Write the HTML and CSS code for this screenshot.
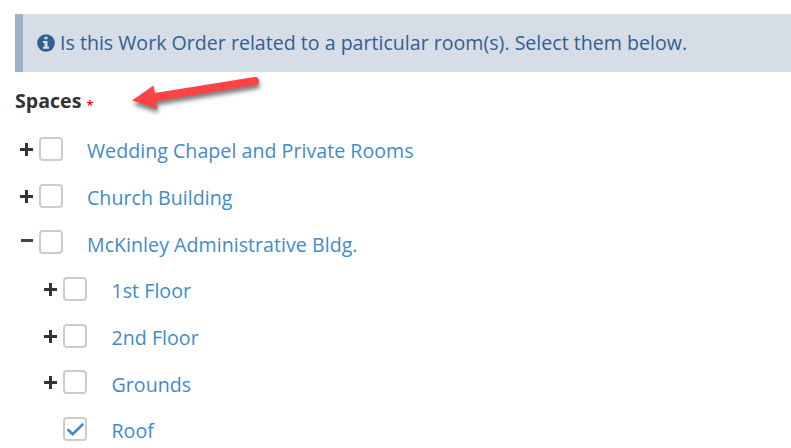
FILE: index.html
```html
<!DOCTYPE html>
<html lang="en">
<head>
    <meta charset="utf-8">
    <title>Work Order Spaces</title>
    <link rel="stylesheet" href="styles.css">
</head>
<body>
<div class="note">
    <svg class="info" viewBox="0 0 18 18">
        <circle cx="9" cy="9" r="8.8" fill="#315f92"/>
        <path d="M7.4 2.7h3.1v2.5H7.4zM6 7h4.5v5.8h1.5v2H6v-2h1.5V9H6z" fill="#d6dde6"/>
    </svg>
    <span>Is this Work Order related to a particular room(s). Select them below.</span>
</div>
<div class="heading">
    <span class="label">Spaces</span>
    <span class="required">*</span>
    <svg class="arrow" viewBox="0 0 150 50">
        <path d="M12 30.5L33.5 15.5L34.8 23L134.5 7A4 4 0 0 1 135.6 15L36.2 31.2L37.5 39Z" fill="#ff4344"/>
    </svg>
</div>
<ul class="tree">
    <li>
        <div class="row"><span class="toggle plus"></span><span class="box"></span><a>Wedding Chapel and Private Rooms</a></div>
    </li>
    <li>
        <div class="row"><span class="toggle plus"></span><span class="box"></span><a>Church Building</a></div>
    </li>
    <li>
        <div class="row"><span class="toggle minus"></span><span class="box"></span><a>McKinley Administrative Bldg.</a></div>
        <ul>
            <li>
                <div class="row"><span class="toggle plus"></span><span class="box"></span><a>1st Floor</a></div>
            </li>
            <li>
                <div class="row"><span class="toggle plus"></span><span class="box"></span><a>2nd Floor</a></div>
            </li>
            <li>
                <div class="row"><span class="toggle plus"></span><span class="box"></span><a>Grounds</a></div>
            </li>
            <li>
                <div class="row"><span class="toggle"></span><span class="box"><svg viewBox="0 0 20 20"><path d="M2.5 10.2L7.7 15.2L18.3 4.8" fill="none" stroke="#428bca" stroke-width="2.6"/></svg></span><a>Roof</a></div>
            </li>
        </ul>
    </li>
</ul>
</body>
</html>
```
FILE: styles.css
```css
* {
    box-sizing: border-box;
}

body {
    margin: 0;
    padding: 14px 0 0 15px;
    height: 448px;
    overflow: hidden;
    background-color: #fff;
    font-family: "Open Sans", sans-serif;
    font-size: 19.6px;
    line-height: 28px;
}

.note {
    display: flex;
    align-items: center;
    height: 58px;
    padding-left: 14px;
    border-left: 8px solid #9db3c8;
    background-color: #d6dde6;
    color: #315f92;
    white-space: nowrap;
}

.info {
    width: 18px;
    height: 18px;
    margin-right: 5px;
}

.heading {
    position: relative;
    display: flex;
    height: 53.7px;
    padding-top: 15px;
}

.label {
    color: #333;
    font-weight: bold;
}

.required {
    margin: 4px 0 0 5px;
    color: #f00;
    font-size: 13px;
    font-weight: 600;
}

.arrow {
    position: absolute;
    left: 105px;
    top: -2px;
    width: 150px;
    height: 50px;
    overflow: visible;
    filter: drop-shadow(1px 4px 2px rgba(0, 0, 0, 0.5));
}

ul {
    margin: 0;
    padding: 0;
    list-style: none;
}

ul ul {
    padding-left: 24px;
}

.row {
    display: flex;
    align-items: center;
    height: 46.67px;
}

.row a {
    margin: 4.6px 0 0 24px;
    color: #428bca;
    letter-spacing: 0.03px;
    white-space: nowrap;
}

ul ul .row a {
    margin-left: 24.5px;
}

.toggle {
    width: 13px;
    height: 13px;
    margin: 1px 6px 0 5px;
    background-repeat: no-repeat;
    background-position: center;
    filter: blur(0.6px);
}

.plus {
    background-image: linear-gradient(#333, #333), linear-gradient(#333, #333);
    background-size: 13px 3px, 3px 13px;
}

.minus {
    margin-top: 0;
    margin-bottom: 4px;
    background-image: linear-gradient(#444, #444);
    background-size: 12px 3px;
}

.box {
    width: 24px;
    height: 24px;
    border: 2px solid #ccc;
    border-radius: 4px;
}

.box svg {
    display: block;
    width: 20px;
    height: 20px;
}
```
